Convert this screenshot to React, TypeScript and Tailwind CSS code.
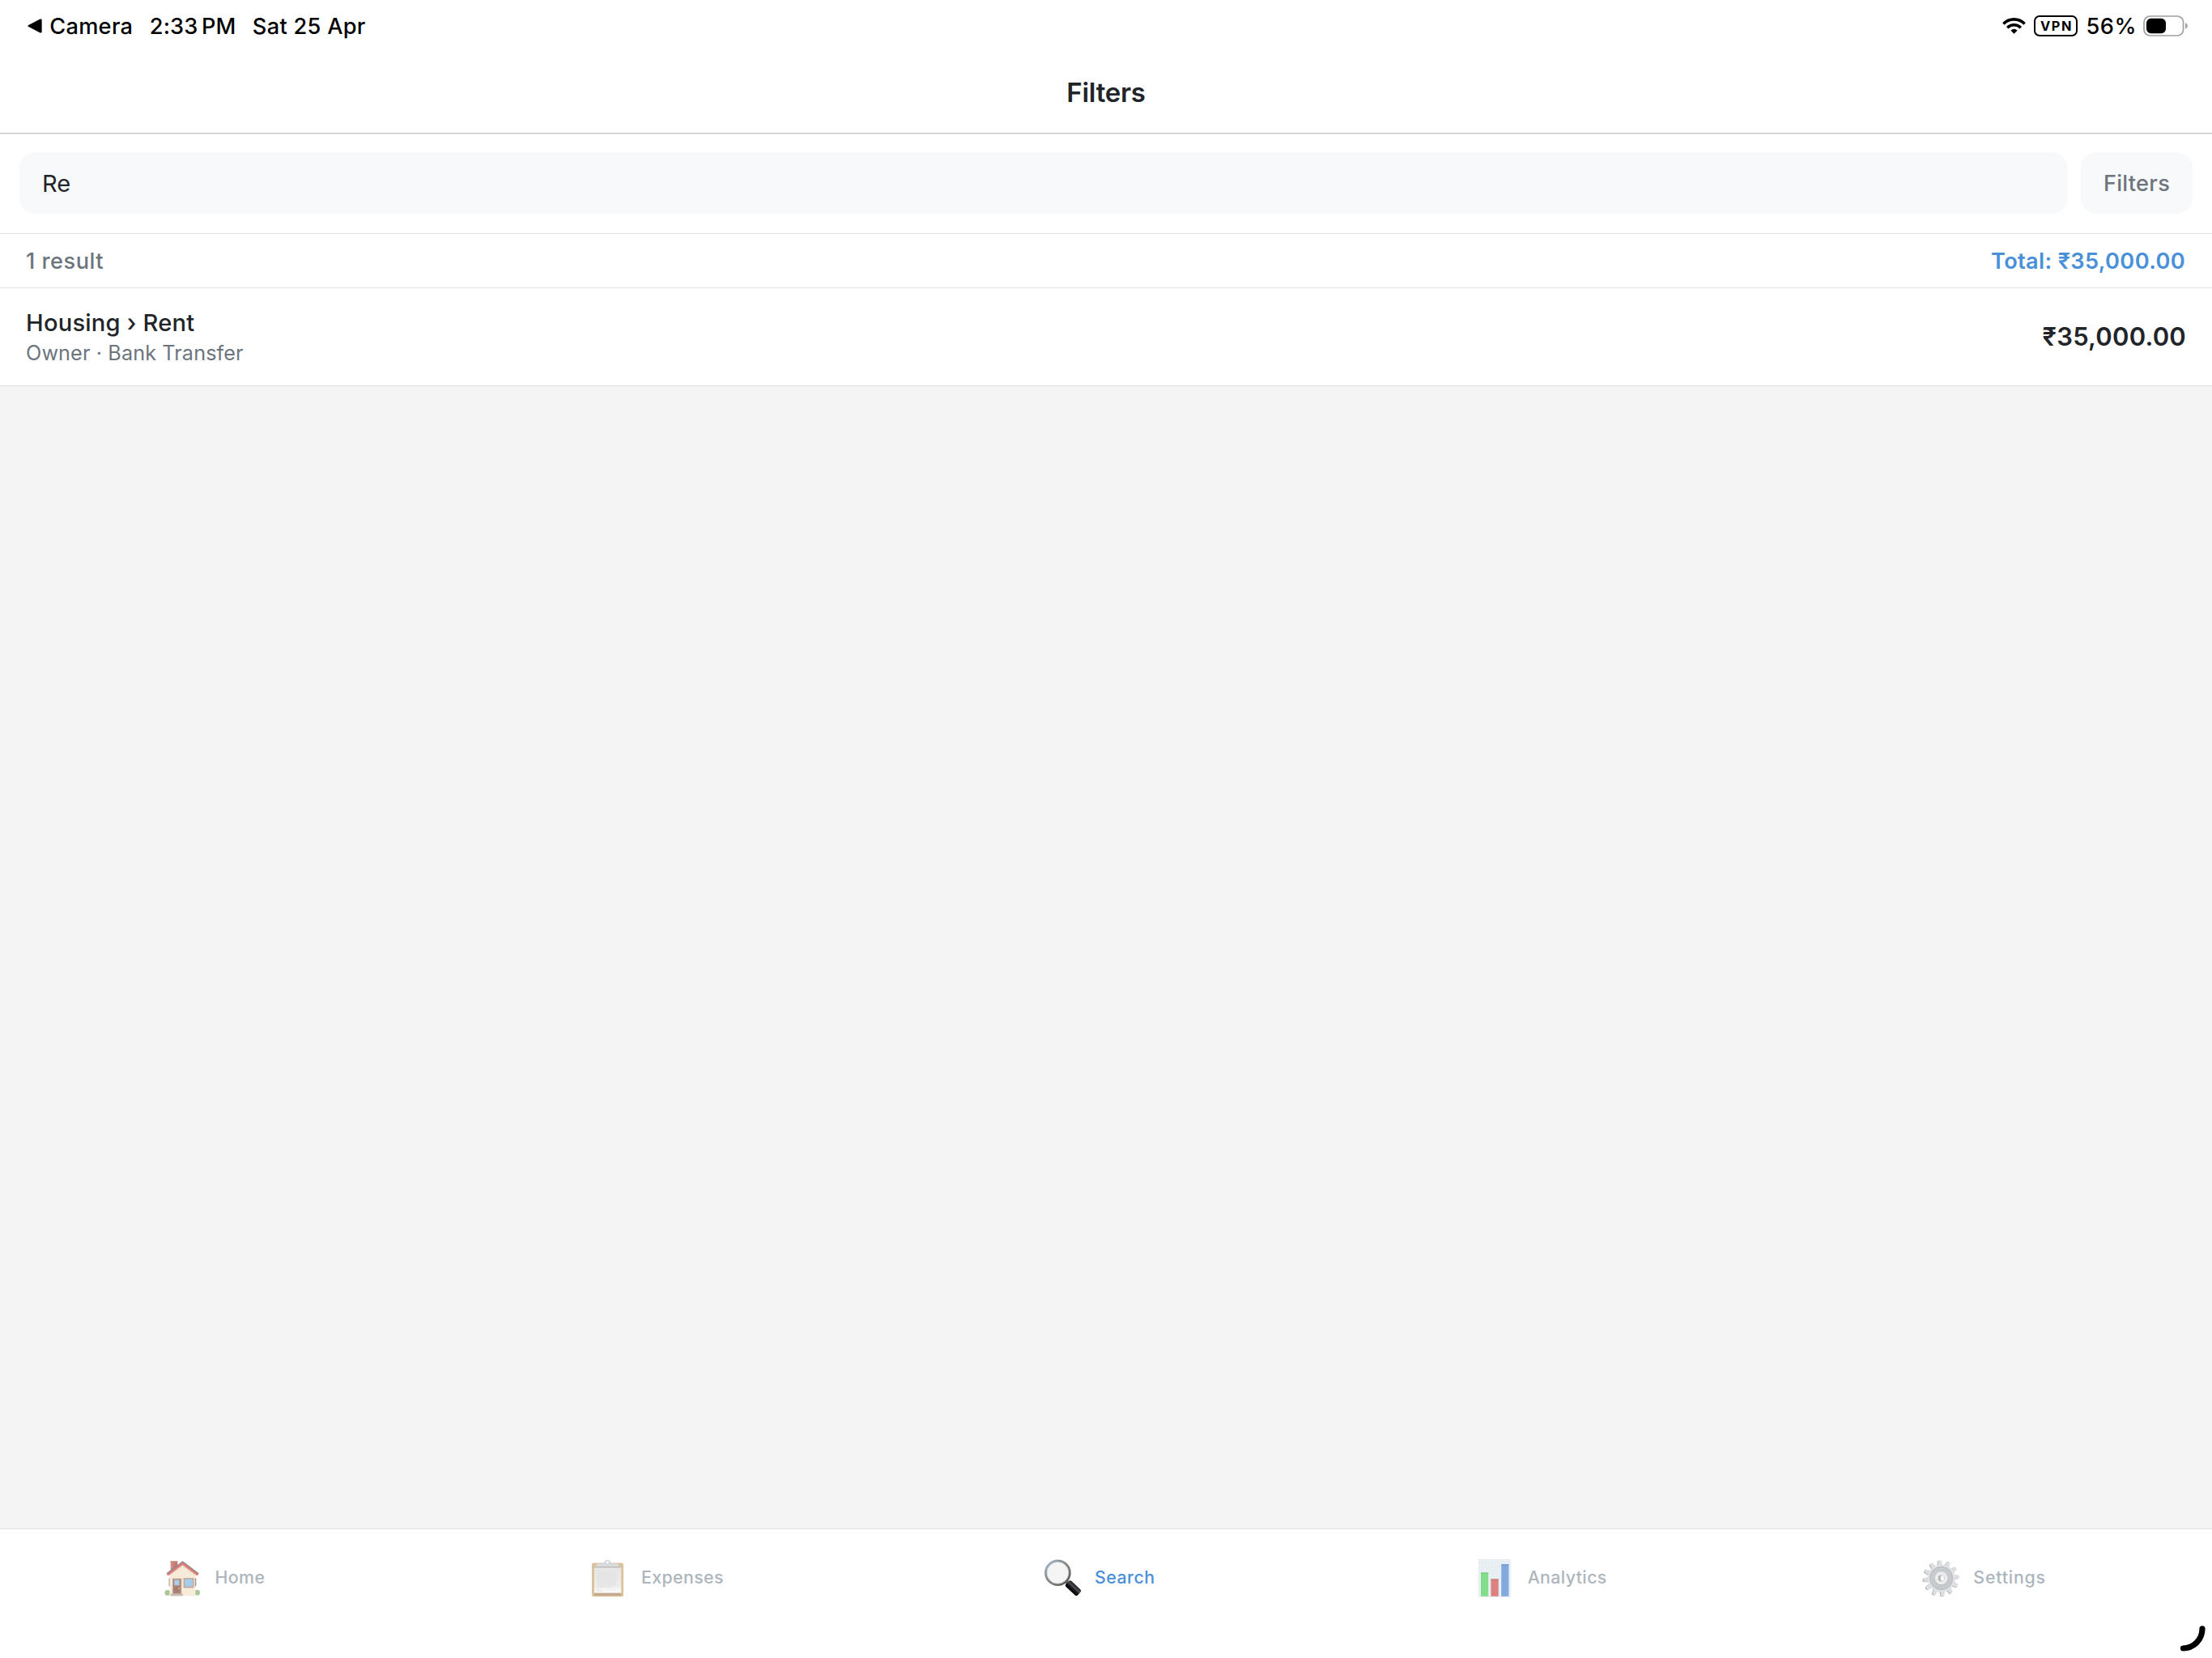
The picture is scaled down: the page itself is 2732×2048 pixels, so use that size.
import type { ReactNode } from "react";

function BackTriangle() {
  return (
    <svg width="18" height="18" viewBox="0 0 18 18">
      <path d="M1.2 8 L15.6 0.6 Q17.6 -0.1 17.6 1.8 V16.2 Q17.6 18.1 15.6 17.4 L1.2 10 Q-0.4 9 1.2 8 Z" fill="#000" />
    </svg>
  );
}

function WifiIcon() {
  return (
    <svg width="29" height="20" viewBox="0 0 29 20">
      <g fill="none" stroke="#000" strokeWidth="3.6">
        <path d="M1.4 7.4 A18.4 18.4 0 0 1 27.6 7.4" />
        <path d="M6.2 12.3 A11.6 11.6 0 0 1 22.8 12.3" />
      </g>
      <path d="M14.5 19.2 L10.9 15.6 A6 6 0 0 1 18.1 15.6 Z" fill="#000" stroke="#000" strokeWidth="1" strokeLinejoin="round" />
    </svg>
  );
}

function BatteryIcon() {
  return (
    <svg width="55" height="26" viewBox="0 0 55 26">
      <rect x="1" y="1" width="48.6" height="24" rx="7.6" fill="none" stroke="#a0a0a0" strokeWidth="1.7" />
      <rect x="4" y="3.8" width="24" height="18.4" rx="5.6" fill="#000" />
      <path d="M52 9 Q54.9 10.4 54.9 13 Q54.9 15.6 52 17 Z" fill="#a0a0a0" />
    </svg>
  );
}

function HomeIcon() {
  return (
    <svg className="size-12" viewBox="0 0 48 48">
      <defs>
        <linearGradient id="wall" x1="0" y1="0" x2="0" y2="1">
          <stop offset="0" stopColor="#f5ead9" />
          <stop offset="1" stopColor="#f8ecda" />
        </linearGradient>
        <linearGradient id="chimney" x1="0" y1="0" x2="1" y2="0">
          <stop offset="0" stopColor="#d99089" />
          <stop offset="1" stopColor="#b96e6b" />
        </linearGradient>
      </defs>
      <circle cx="4.9" cy="42.4" r="3.4" fill="#a9c795" />
      <circle cx="41.6" cy="42.2" r="3.4" fill="#a9c795" />
      <rect x="8.7" y="3.6" width="8.5" height="12" fill="url(#chimney)" />
      <rect x="8.4" y="3.2" width="9.1" height="1.6" fill="#c98f8a" />
      <path d="M7.4 46.2 V17.5 L23.5 5.5 L39.4 17.5 V46.2 Z" fill="url(#wall)" />
      <rect x="6.4" y="24.4" width="1.5" height="10" fill="#c5b3aa" />
      <rect x="38.8" y="24.4" width="1.5" height="10" fill="#a8948e" />
      <path d="M4.6 20.2 L23.5 6.2 L42.6 20.2" fill="none" stroke="#dd7d79" strokeWidth="3.1" />
      <path d="M4 18.7 L23.5 4 L43.2 18.7" fill="none" stroke="#8e8583" strokeWidth="1.3" />
      <path d="M6.8 21.6 L23.5 9.2 L40.2 21.6" fill="none" stroke="#e6d3bf" strokeWidth="0.9" />
      <rect x="10.9" y="24.7" width="11.4" height="19.2" fill="#c2a797" />
      <rect x="12" y="25.8" width="9.2" height="18" fill="#ad8578" />
      <rect x="13.3" y="26.6" width="6.2" height="6.6" fill="#a9cfe9" />
      <rect x="13.3" y="35.2" width="6.2" height="6.4" fill="#a67c70" />
      <circle cx="18.9" cy="37.1" r="0.9" fill="#ecc66d" />
      <rect x="24.6" y="24.2" width="12.8" height="12.2" fill="#bfa596" />
      <rect x="26" y="25.6" width="10" height="9.2" fill="#a4cbe8" />
      <path d="M31 25.6 V34.8" stroke="#b5d3e8" strokeWidth="0.6" />
      <rect x="8.6" y="43.5" width="15.2" height="2.9" fill="#c6beb6" />
    </svg>
  );
}

function ExpensesIcon() {
  return (
    <svg className="size-12" viewBox="0 0 48 48">
      <defs>
        <linearGradient id="paper" x1="0" y1="0" x2="0" y2="1">
          <stop offset="0" stopColor="#e6e6e6" />
          <stop offset="0.7" stopColor="#ececec" />
          <stop offset="1" stopColor="#fbfbfb" />
        </linearGradient>
      </defs>
      <rect x="3" y="5.5" width="39" height="41.8" rx="2.2" fill="#dcc29d" />
      <rect x="6" y="42" width="33.2" height="4" fill="#c3aa8e" />
      <rect x="6" y="9.4" width="33.2" height="33.2" fill="url(#paper)" />
      <rect x="6" y="9.6" width="33.2" height="1.8" fill="#c1b7ae" />
      <path d="M8.3 10 Q8.3 6.2 12 6.2 H32.6 Q36.3 6.2 36.3 10 Z" fill="#d9dcdf" />
      <path d="M17.6 6.8 Q18.8 2.4 22.3 2.4 Q25.8 2.4 27.2 6.8 Z" fill="#cbd6e1" />
      <circle cx="22.3" cy="4.9" r="2.6" fill="#f2f3f4" stroke="#cdd0d4" strokeWidth="1.1" />
      <g stroke="#dadada" strokeWidth="0.8">
        <path d="M8.8 15.2 H13.6" />
        <path d="M9 18.4 H32" />
        <path d="M9 20.8 H33.4" />
        <path d="M9 23.2 H32.4" />
        <path d="M9 25.6 H34.4" />
        <path d="M9 28 H33" />
        <path d="M9 30.4 H32" />
        <path d="M9 32.8 H33.6" />
        <path d="M9 35 H28" />
        <path d="M9 38 H12" />
        <path d="M9 40 H16" />
      </g>
    </svg>
  );
}

function SearchIcon() {
  return (
    <svg className="size-12" viewBox="0 0 48 48">
      <defs>
        <linearGradient id="rim" x1="0" y1="0" x2="1" y2="1">
          <stop offset="0" stopColor="#a9c4e4" />
          <stop offset="0.3" stopColor="#8b9096" />
          <stop offset="0.6" stopColor="#83807c" />
          <stop offset="1" stopColor="#4b4b4b" />
        </linearGradient>
        <linearGradient id="handle" x1="0" y1="0" x2="0" y2="1">
          <stop offset="0" stopColor="#17191b" />
          <stop offset="0.35" stopColor="#4b5056" />
          <stop offset="0.6" stopColor="#15171a" />
          <stop offset="1" stopColor="#000" />
        </linearGradient>
      </defs>
      <path d="M27.6 28.2 L31.5 32" stroke="#77797b" strokeWidth="4.4" />
      <rect x="0" y="-4.9" width="20" height="9.8" rx="2.6" fill="url(#handle)" transform="translate(29.2 29.9) rotate(43)" />
      <circle cx="17.4" cy="17.8" r="14.9" fill="#f5f5f6" stroke="url(#rim)" strokeWidth="2.8" />
      <circle cx="17.4" cy="17.8" r="13.3" fill="none" stroke="#c9cbcd" strokeWidth="0.8" />
    </svg>
  );
}

function AnalyticsIcon() {
  const lines = [6.5, 9.3, 12.1, 14.9, 17.7, 20.5, 23.3, 26.1, 28.9, 31.7, 34.5, 37.3, 40.1, 42.9];
  return (
    <svg className="size-12" viewBox="0 0 48 48">
      <rect x="3.7" y="1.4" width="38.4" height="45.8" fill="#edf3f7" />
      {lines.map((n) => (
        <g key={n} stroke="#dfe7ed" strokeWidth="0.6">
          <path d={`M3.7 ${n - 1.5} H42.1`} />
          {n < 42 && <path d={`M${n} 1.4 V47.2`} />}
        </g>
      ))}
      <rect x="3.7" y="1.4" width="38.4" height="45.8" fill="none" stroke="#e1e6ea" strokeWidth="0.8" />
      <rect x="6" y="17.6" width="9.2" height="29.2" fill="#83de8b" />
      <rect x="6" y="17.6" width="9.2" height="1" fill="#6cc676" />
      <rect x="18.4" y="25.6" width="9.3" height="21.2" fill="#dd8080" />
      <rect x="18.4" y="25.6" width="9.3" height="1" fill="#c86a6c" />
      <rect x="31.2" y="7.4" width="9.2" height="39.4" fill="#82aade" />
      <rect x="31.2" y="7.4" width="9.2" height="1" fill="#6890c8" />
    </svg>
  );
}

function SettingsIcon() {
  const teeth = [-5, 25, 55, 85, 115, 145, 175, 205, 235, 265, 295, 325];
  const tooth = "M20.8 9 L21.6 3.2 Q21.8 2.3 22.7 2.3 H24.7 Q25.6 2.3 25.8 3.2 L26.6 9 Z";
  return (
    <svg className="size-12" viewBox="0 0 48 48">
      {teeth.map((a) => (
        <path key={a} d={tooth} fill="#b0a9a5" transform={`translate(-0.9 0.5) rotate(${a} 23.7 24.5)`} />
      ))}
      {teeth.map((a) => (
        <path key={a} d={tooth} fill="#dcdee1" transform={`rotate(${a} 23.7 24.5)`} />
      ))}
      <circle cx="23.7" cy="24.5" r="17" fill="#dfe1e4" />
      <circle cx="23.7" cy="24.5" r="13.6" fill="#cccfd1" stroke="#bcc0c2" strokeWidth="1.6" />
      <circle cx="23.7" cy="24.5" r="10.6" fill="none" stroke="#bfc3c5" strokeWidth="1" />
      <circle cx="24" cy="25" r="8.4" fill="#b9bcbe" />
      <circle cx="23.7" cy="24.3" r="7.9" fill="#ececee" />
      <circle cx="23.7" cy="24.5" r="4" fill="#b5b2b0" />
      <ellipse cx="25" cy="24.5" rx="2.3" ry="3.4" fill="#f6f6f7" />
    </svg>
  );
}

function Tab({ icon, children, active }: { icon: ReactNode; children: ReactNode; active?: boolean }) {
  return (
    <button className="flex flex-1 basis-0 items-center justify-center">
      <span className="mr-[15.5px] -ml-[17px] shrink-0">{icon}</span>
      <span className={`pb-0.5 text-[21.3px] leading-7 font-medium ${active ? "text-[#4a90d9]" : "text-[#adb5bd]"}`}>
        {children}
      </span>
    </button>
  );
}

export default function App() {
  return (
    <div className="relative flex h-screen w-full flex-col overflow-hidden bg-[#f4f4f4] font-['Inter',sans-serif] text-[#212529]">
      <header className="border-b border-[#c5c5c5] bg-white">
        <div className="flex h-16 items-center justify-between pr-[30px] pl-[34px] text-[27.2px] leading-8 font-medium text-black">
          <div className="flex items-center">
            <BackTriangle />
            <span className="ml-[9.2px] pt-0.5 tracking-[0.3px]">Camera</span>
            <span className="ml-[20.5px] pt-0.5 tracking-[0.09px]">2:33&#8201;PM</span>
            <span className="ml-[20.3px] pt-0.5 tracking-[0.29px]">Sat 25 Apr</span>
          </div>
          <div className="flex items-center">
            <WifiIcon />
            <span className="ml-[9.5px] flex h-[26px] w-[54.5px] items-center justify-center rounded-[7px] border-2 border-black pl-[1.5px] text-[16.4px] leading-none font-bold tracking-[1.5px]">
              VPN
            </span>
            <span className="ml-[10px] pt-0.5 tracking-[0.53px]">56%</span>
            <span className="ml-2">
              <BatteryIcon />
            </span>
          </div>
        </div>
        <div className="flex h-[100px] items-center justify-center">
          <h1 className="text-[33px] leading-10 font-semibold tracking-[-0.25px]">Filters</h1>
        </div>
      </header>

      <div className="flex gap-4 border-t border-b border-t-[#ececec] border-b-[#dee2e6] bg-white px-6 pt-[22px] pb-6">
        <input
          className="h-[76px] flex-1 rounded-[20px] bg-[#f8f9fa] px-7 pt-px text-[29.1px] outline-none"
          defaultValue="Re"
        />
        <button className="h-[76px] w-[138px] rounded-[20px] bg-[#f8f9fa] pt-0.5 text-[27.2px] font-medium tracking-[0.28px] text-[#6c757d]">
          Filters
        </button>
      </div>

      <div className="flex h-[67px] items-center justify-between border-b border-[#dee2e6] bg-white pt-0.5 pr-[33px] pl-8 text-[27.2px] leading-8">
        <span className="font-medium tracking-[0.51px] text-[#6c757d]">1 result</span>
        <span className="font-semibold tracking-[0.35px] text-[#4a90d9]">Total: ₹35,000.00</span>
      </div>

      <div className="flex h-[121px] items-center justify-between border-b border-[#dee2e6] bg-white px-8">
        <div className="flex flex-col gap-[3px] pt-px">
          <p className="text-[29.1px] leading-9 font-medium tracking-[0.22px]">Housing › Rent</p>
          <p className="text-[25.2px] leading-8 tracking-[0.12px] text-[#6c757d]">Owner · Bank Transfer</p>
        </div>
        <p className="text-[31px] leading-10 font-semibold tracking-[0.21px]">₹35,000.00</p>
      </div>

      <nav className="mt-auto flex h-40 border-t border-[#dee2e6] bg-white pb-10">
        <Tab icon={<HomeIcon />}>
          <span className="tracking-[0.45px]">Home</span>
        </Tab>
        <Tab icon={<ExpensesIcon />}>
          <span className="tracking-[0.4px]">Expenses</span>
        </Tab>
        <Tab icon={<SearchIcon />} active>
          <span className="tracking-[0.5px]">Search</span>
        </Tab>
        <Tab icon={<AnalyticsIcon />}>
          <span className="tracking-[0.4px]">Analytics</span>
        </Tab>
        <Tab icon={<SettingsIcon />}>
          <span className="tracking-[0.8px]">Settings</span>
        </Tab>
      </nav>

      {/* corner handle over the tab bar */}
      <svg className="absolute right-0 bottom-0 size-[50px]" viewBox="0 0 50 50">
        <path d="M38 13.8 A24 24 0 0 1 14.5 38" fill="none" stroke="#000" strokeWidth="7.2" strokeLinecap="round" />
      </svg>
    </div>
  );
}
